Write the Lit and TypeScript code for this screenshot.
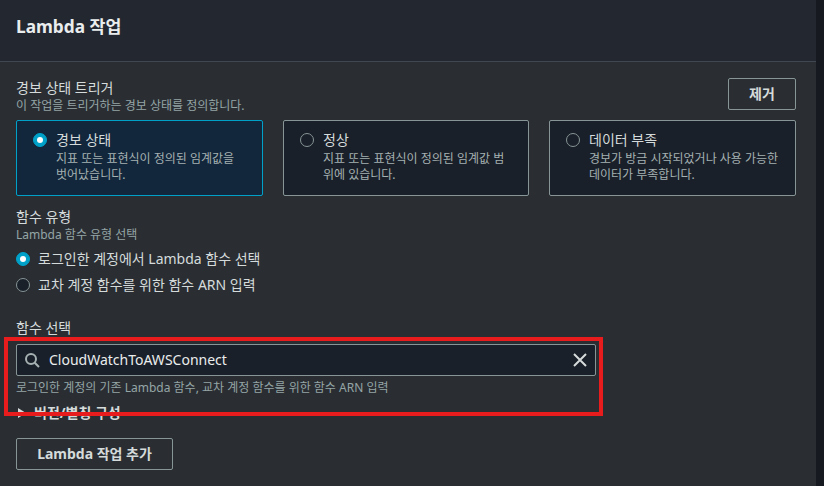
import { LitElement, html, css, svg, unsafeCSS } from "lit";
import { customElement } from "lit/decorators.js";

const FONT = unsafeCSS(`"Noto Sans", "Noto Sans CJK KR", sans-serif`);

const cards = [
  { title: "경보 상태", desc: "지표 또는 표현식이 정의된 임계값을 벗어났습니다.", on: true },
  { title: "정상", desc: "지표 또는 표현식이 정의된 임계값 범위에 있습니다.", on: false },
  { title: "데이터 부족", desc: "경보가 방금 시작되었거나 사용 가능한 데이터가 부족합니다.", on: false },
];

@customElement("app-root")
export class AppRoot extends LitElement {
  static styles = css`
    :host { display: block; width: 824px; height: 486px; overflow: hidden; background: #16191f; font-family: ${FONT}; position: relative; }
    .panel { width: 816px; height: 486px; background: #2a2e33; box-sizing: border-box; }
    .head { box-sizing: border-box; height: 62px; background: #232730; border-bottom: 1px solid #414750; padding: 14px 16px 0; }
    h2 { margin: 0; font-size: 17.3px; line-height: 26px; font-weight: 700; color: #eaeded; }
    .body { padding: 16px 20px 0 16px; display: flex; flex-direction: column; }
    .top { display: flex; justify-content: space-between; align-items: flex-start; height: 42px; }
    .label { font-size: 14px; line-height: 20px; color: #d5dbdb; }
    .hint { font-size: 12px; line-height: 16px; color: #95a5a6; }
    .btn { box-sizing: border-box; height: 32px; border: 1px solid #879596; border-radius: 2px; background: transparent; color: #d5dbdb; font: 700 14px/20px ${FONT}; padding: 0; display: flex; align-items: center; justify-content: center; }
    .remove { width: 68px; }
    .add { width: 157px; margin-top: 15px; }
    .cards { display: grid; grid-template-columns: 247px 246px 247px; gap: 20px; }
    .card { box-sizing: border-box; height: 76px; border: 1px solid #879596; border-radius: 2px; background: #1a2029; padding: 10px 16px 0; display: flex; gap: 9px; }
    .card.on { border-color: #00a1c9; background: #12273b; }
    .radio { flex: none; width: 14px; height: 14px; border-radius: 50%; border: 1px solid #879596; box-sizing: border-box; margin-top: 2px; background: #1a2029; position: relative; }
    .radio.on { background: #00a1c9; border-color: #00a1c9; }
    .radio.on::after { content: ""; position: absolute; left: 3px; top: 3px; width: 6px; height: 6px; border-radius: 50%; background: #fff; }
    .ct { font-size: 14px; line-height: 18px; color: #d5dbdb; }
    .cd { font-size: 12px; line-height: 16px; color: #a5b1b2; margin-top: 2px; }
    .sec { margin-top: 11px; }
    .opt { display: flex; align-items: center; gap: 8px; font-size: 14px; line-height: 20px; color: #d5dbdb; margin-top: 6px; height: 20px; }
    .opt .radio { margin-top: 0; }
    .sec2 { margin-top: 23px; }
    .input { box-sizing: border-box; width: 580px; height: 32px; border: 1px solid #879596; border-radius: 2px; background: #1a2029; display: flex; align-items: center; padding: 0 7px; margin-top: 6px; }
    .input .val { flex: 1; font-size: 14px; color: #eaeded; margin-left: 9px; line-height: 20px; }
    .input svg { display: block; flex: none; }
    .desc { font-size: 12px; line-height: 16px; color: #95a5a6; margin-top: 4px; }
    .expand { display: flex; align-items: center; gap: 8px; font-size: 14px; font-weight: 700; line-height: 20px; color: #d5dbdb; margin-top: 7px; }
    .tri { width: 0; height: 0; border-left: 8px solid #d5dbdb; border-top: 5px solid transparent; border-bottom: 5px solid transparent; margin-left: 2px; }
    .frame { position: absolute; left: 4px; top: 337px; width: 599px; height: 79px; box-sizing: border-box; border: 4px solid #e81c1c; pointer-events: none; }
  `;

  render() {
    return html`
      <div class="panel">
        <div class="head"><h2>Lambda 작업</h2></div>
        <div class="body">
          <div class="top">
            <div>
              <div class="label">경보 상태 트리거</div>
              <div class="hint">이 작업을 트리거하는 경보 상태를 정의합니다.</div>
            </div>
            <button class="btn remove">제거</button>
          </div>
          <div class="cards">
            ${cards.map(
              (c) => html`
                <div class="card ${c.on ? "on" : ""}">
                  <span class="radio ${c.on ? "on" : ""}"></span>
                  <div>
                    <div class="ct">${c.title}</div>
                    <div class="cd">${c.desc}</div>
                  </div>
                </div>
              `,
            )}
          </div>
          <div class="sec">
            <div class="label">함수 유형</div>
            <div class="hint">Lambda 함수 유형 선택</div>
            <div class="opt"><span class="radio on"></span>로그인한 계정에서 Lambda 함수 선택</div>
            <div class="opt"><span class="radio"></span>교차 계정 함수를 위한 함수 ARN 입력</div>
          </div>
          <div class="sec2">
            <div class="label">함수 선택</div>
            <div class="input">
              ${svg`<svg width="16" height="16" viewBox="0 0 16 16" fill="none" stroke="#a5b1b2" stroke-width="2"><circle cx="7" cy="7" r="5"/><path d="M10.7 10.7 15 15"/></svg>`}
              <span class="val">CloudWatchToAWSConnect</span>
              ${svg`<svg width="16" height="16" viewBox="0 0 16 16" fill="none" stroke="#d5dbdb" stroke-width="2"><path d="M2 2l12 12M14 2 2 14"/></svg>`}
            </div>
            <div class="desc">로그인한 계정의 기존 Lambda 함수, 교차 계정 함수를 위한 함수 ARN 입력</div>
          </div>
          <div class="expand"><span class="tri"></span>버전/별칭 구성</div>
          <button class="btn add">Lambda 작업 추가</button>
        </div>
      </div>
      <div class="frame"></div>
    `;
  }
}
